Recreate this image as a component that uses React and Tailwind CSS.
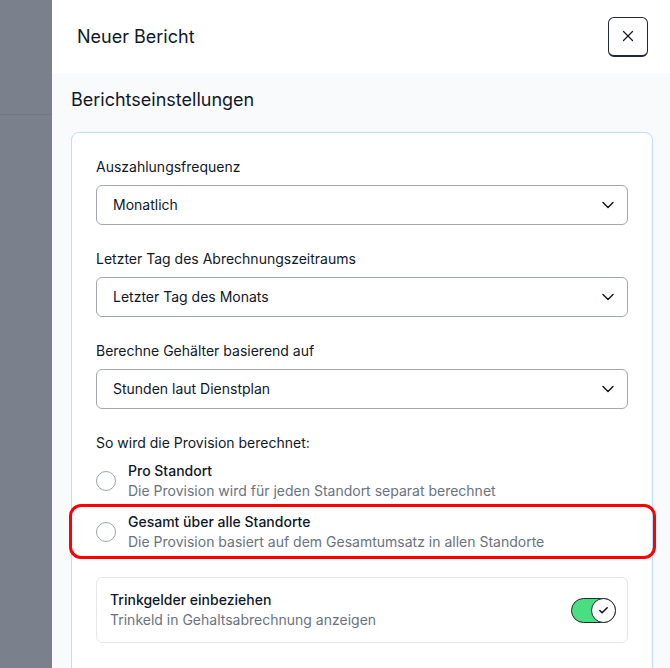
import { ChevronDown, X, Check } from 'lucide-react'

const selects = [
  { label: 'Auszahlungsfrequenz', value: 'Monatlich' },
  { label: 'Letzter Tag des Abrechnungszeitraums', value: 'Letzter Tag des Monats' },
  { label: 'Berechne Gehälter basierend auf', value: 'Stunden laut Dienstplan' },
]

const options = [
  { title: 'Pro Standort', desc: 'Die Provision wird für jeden Standort separat berechnet' },
  { title: 'Gesamt über alle Standorte', desc: 'Die Provision basiert auf dem Gesamtumsatz in allen Standorte', marked: true },
]

function SelectField({ label, value }) {
  return (
    <div>
      <label className="block text-sm leading-5 text-gray-900 mb-[8px]">{label}</label>
      <div className="h-10 flex items-center justify-between border border-[#a1a6b2] rounded-md pl-4 pr-[9px] text-sm text-gray-900 bg-white">
        <span>{value}</span>
        <ChevronDown size={20} strokeWidth={1.75} className="text-gray-900" />
      </div>
    </div>
  )
}

export default function App() {
  return (
    <div className="flex h-[668px] w-[670px] overflow-hidden font-['Inter',sans-serif] text-gray-900">
      <div className="w-[52px] shrink-0 bg-[#7b818c]">
        <div className="h-[115px] border-b border-[#737984]" />
      </div>

      <div className="flex-1 flex flex-col bg-[#f8fafc]">
        <div className="h-[73px] shrink-0 bg-white flex items-center justify-between pl-[25px] pr-[22px]">
          <h2 className="text-lg leading-7">Neuer Bericht</h2>
          <button className="w-10 h-10 flex items-center justify-center border border-[#1f2937] border-b-[2px] rounded-md bg-white">
            <X size={18} strokeWidth={1.6} />
          </button>
        </div>

        <div className="pt-[13px] pl-[19px] pr-[17px]">
          <h3 className="text-lg leading-7 mb-[18px]">Berichtseinstellungen</h3>

          <div className="bg-white border border-[#bfdbfe] rounded-lg p-6 pb-10">
            <div className="flex flex-col gap-6">
              {selects.map(s => (
                <SelectField key={s.label} label={s.label} value={s.value} />
              ))}
            </div>

            <p className="text-sm leading-5 mt-6 mb-[8px]">So wird die Provision berechnet:</p>
            <div className="flex flex-col gap-[11px]">
              {options.map(o => (
                <div key={o.title} className="relative flex items-center gap-3">
                  <span className="w-5 h-5 rounded-full border border-[#9ca3af] bg-white shrink-0" />
                  <div>
                    <div className="text-sm leading-5 font-medium">{o.title}</div>
                    <div className="text-sm leading-5 text-gray-500">{o.desc}</div>
                  </div>
                  {o.marked && (
                    <div className="absolute -left-[27px] -right-[28px] -top-[8px] -bottom-[7px] border-[3px] border-[#ff0000] rounded-[12px] pointer-events-none" />
                  )}
                </div>
              ))}
            </div>

            <div className="mt-[25px] border border-gray-200 rounded-md pl-[13px] pr-[11px] py-3 flex items-center justify-between">
              <div>
                <div className="text-sm leading-5 font-medium">Trinkgelder einbeziehen</div>
                <div className="text-sm leading-5 text-gray-500">Trinkeld in Gehaltsabrechnung anzeigen</div>
              </div>
              <div className="w-[45px] h-[25px] rounded-full bg-[#4ade80] border border-[#1f2937] relative">
                <span className="absolute right-[-1px] top-[-1px] w-[25px] h-[25px] rounded-full bg-white border border-[#1f2937] flex items-center justify-center">
                  <Check size={11} strokeWidth={3.5} />
                </span>
              </div>
            </div>
          </div>
        </div>
      </div>
    </div>
  )
}
